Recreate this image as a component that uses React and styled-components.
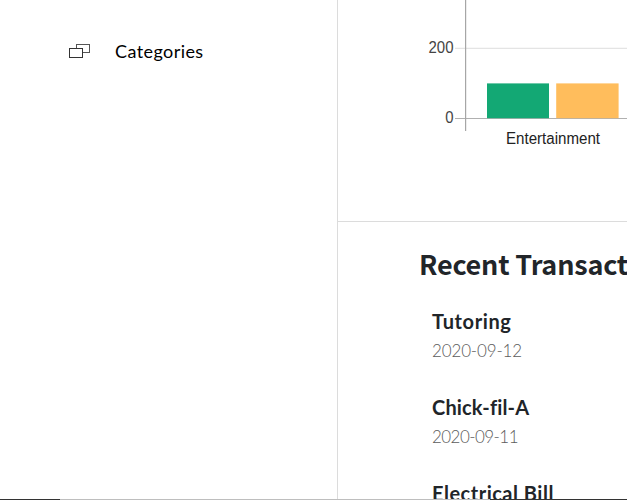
import React from "react";
import styled, { createGlobalStyle } from "styled-components";

const GlobalStyle = createGlobalStyle`
  * { box-sizing: border-box; }
  html, body { margin: 0; background: #fff; overflow: hidden; }
`;

const Page = styled.div`
  display: grid;
  grid-template-rows: 499px 1px;
  width: 627px;
  height: 500px;
  overflow: hidden;
`;

const Columns = styled.div`
  display: grid;
  grid-template-columns: 337px 290px;
  min-height: 0;
  overflow: hidden;
  background: #fff;
`;

const Sidebar = styled.nav`
  padding: 37px 0 0 68px;
`;

const NavItem = styled.a`
  display: flex;
  align-items: flex-start;
  height: 28px;
  gap: 24px;
  color: #000;
  font: 400 18px/28px Lato, sans-serif;
  letter-spacing: 0.42px;
  white-space: nowrap;
`;

const NavIcon = styled.svg`
  display: block;
  flex: none;
  width: 23px;
  height: 17px;
  margin-top: 5px;
`;

const Main = styled.main`
  border-left: 1px solid #dcdcdc;
  height: 499px;
  overflow: hidden;
`;

const ChartPanel = styled.section`
  height: 222px;
  border-bottom: 1px solid #dcdcdc;
`;

const Chart = styled.svg`
  display: block;
  width: 289px;
  height: 160px;
  font-family: "Liberation Sans", Arial, sans-serif;
  font-size: 16px;
`;

const Transactions = styled.section`
  padding: 22px 0 0 81px;
`;

const Heading = styled.h2`
  margin: 0;
  height: 40px;
  color: #212529;
  font: 700 27px/40px "Noto Sans CJK SC", sans-serif;
  letter-spacing: -0.2px;
  white-space: nowrap;
`;

const List = styled.div`
  display: flex;
  flex-direction: column;
  padding: 23px 0 0 13px;
`;

const Row = styled.article`
  height: 86px;
  flex: none;
`;

const Name = styled.div`
  height: 29px;
  color: #212529;
  font: 700 20px/29px Lato, sans-serif;
  letter-spacing: ${(p) => p.$tracking}px;
  white-space: nowrap;
`;

const When = styled.div`
  height: 29px;
  color: #5c5c5c;
  font: 300 17px/29px Lato, sans-serif;
  letter-spacing: ${(p) => p.$tracking}px;
  white-space: nowrap;
`;

const BottomEdge = styled.div`
  display: grid;
  grid-template-columns: 60px 430px 1fr;
  background: #333;
`;

const EdgeLight = styled.div`
  grid-column: 2;
  background: #bebebe;
`;

const transactions = [
  { name: "Tutoring", date: "2020-09-12", track: 0.6, dateTrack: -0.15 },
  { name: "Chick-fil-A", date: "2020-09-11", track: 0.15, dateTrack: -0.55 },
  { name: "Electrical Bill", date: "2020-09-10", track: 0.5, dateTrack: 0 },
];

export default function App() {
  return (
    <>
      <GlobalStyle />
      <Page>
        <Columns>
          <Sidebar>
            <NavItem>
              <NavIcon viewBox="0 0 23 17" fill="none" stroke="#333" shapeRendering="crispEdges">
                <path d="M8.5 6V2.5H21.5V10.5H15" stroke="#555" />
                <path d="M1.5 6.5H14.5V15.5H1.5Z" />
              </NavIcon>
              Categories
            </NavItem>
          </Sidebar>
          <Main>
            <ChartPanel>
              <Chart viewBox="338 0 289 160">
                <path d="M455 48.3H627" stroke="#e4e4e4" strokeWidth="1.3" />
                <path d="M455 118.5H627" stroke="#b0b0b0" />
                <path d="M465.6 0V131" stroke="#a6a6a6" strokeWidth="1.2" />
                <rect x="487" y="83.4" width="62" height="34.8" fill="#13a874" />
                <rect x="556.2" y="83.4" width="62.4" height="34.8" fill="#ffbd5c" />
                <text x="453.5" y="53" textAnchor="end" textLength="25" lengthAdjust="spacingAndGlyphs" fill="#444">200</text>
                <text x="453.5" y="123" textAnchor="end" textLength="8.3" lengthAdjust="spacingAndGlyphs" fill="#444">0</text>
                <text x="506" y="144" textLength="94" lengthAdjust="spacingAndGlyphs" fill="#222">Entertainment</text>
              </Chart>
            </ChartPanel>
            <Transactions>
              <Heading>Recent Transactions</Heading>
              <List>
                {transactions.map((t) => (
                  <Row key={t.name}>
                    <Name $tracking={t.track}>{t.name}</Name>
                    <When $tracking={t.dateTrack}>{t.date}</When>
                  </Row>
                ))}
              </List>
            </Transactions>
          </Main>
        </Columns>
        <BottomEdge>
          <EdgeLight />
        </BottomEdge>
      </Page>
    </>
  );
}
